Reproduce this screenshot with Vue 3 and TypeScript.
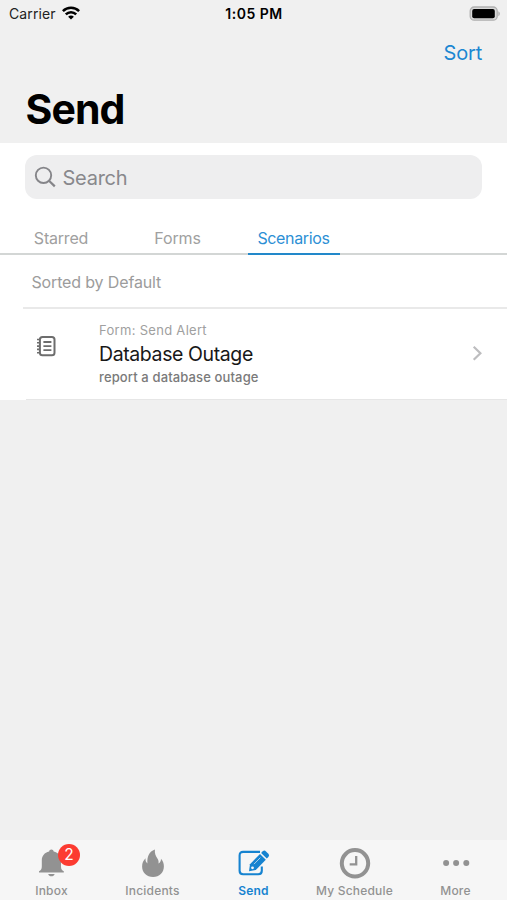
<script setup lang="ts">
import { ref } from 'vue'

interface NavItem {
  id: string
  label: string
  badge?: number
}

const tabs: string[] = ['Starred', 'Forms', 'Scenarios']
const activeTab = ref('Scenarios')

const navItems: NavItem[] = [
  { id: 'inbox', label: 'Inbox', badge: 2 },
  { id: 'incidents', label: 'Incidents' },
  { id: 'send', label: 'Send' },
  { id: 'schedule', label: 'My Schedule' },
  { id: 'more', label: 'More' },
]
const activeNav = ref('send')
</script>

<template>
  <div class="screen">
    <div class="status">
      <div class="carrier">
        <span class="carrier-name">Carrier</span>
        <svg class="wifi" width="18" height="14" viewBox="0 0 18 14">
          <g fill="none" stroke="#000" stroke-width="2.5">
            <path d="M0.9 5.1C5.4 0.6 12.6 0.6 17.1 5.1" />
            <path d="M3.8 8.4C6.7 5.5 11.3 5.5 14.2 8.4" />
          </g>
          <path d="M9 13.6L6.1 10.7C7.7 9.1 10.3 9.1 11.9 10.7Z" />
        </svg>
      </div>
      <span class="time">1:05 PM</span>
      <svg class="battery" width="32" height="16" viewBox="0 0 32 16">
        <rect x="1.2" y="1" width="27" height="13.2" rx="4" fill="#d8d8d8" stroke="#b0b0b0" stroke-width="1.3" />
        <rect x="3.2" y="2.9" width="22.6" height="9.4" rx="2" />
        <path d="M29.4 5.3C31.3 6.2 31.3 9.3 29.4 10.2Z" fill="#aaa" />
      </svg>
    </div>

    <header class="header">
      <a class="sort">Sort</a>
      <h1 class="title">Send</h1>
    </header>

    <main class="panel">
      <div class="search">
        <svg width="22" height="22" viewBox="0 0 22 22" fill="none" stroke="#858589" stroke-width="1.9">
          <circle cx="9.5" cy="9.3" r="7.7" />
          <path d="M15 14.8L20.8 20.4" stroke-width="2.2" />
        </svg>
        <span class="placeholder">Search</span>
      </div>

      <nav class="tabs">
        <button
          v-for="tab in tabs"
          :key="tab"
          class="tab"
          :class="[tab.toLowerCase(), { active: tab === activeTab }]"
          @click="activeTab = tab"
        >{{ tab }}</button>
      </nav>

      <div class="sorted">Sorted by Default</div>

      <article class="row">
        <svg class="notebook" width="20" height="22" viewBox="0 0 20 22" fill="none" stroke="#6d6d6d">
          <rect x="3.9" y="1.9" width="14.6" height="18.4" rx="2.6" stroke-width="2" />
          <path d="M1 4.5H4M1 7.8H4M1 11.1H4M1 14.4H4M1 17.7H4" stroke-width="1.6" />
          <path d="M7.4 7H15.4M7.4 11.1H15.4M7.4 15.2H15.4" stroke-width="1.8" />
        </svg>
        <div class="copy">
          <span class="form">Form: Send Alert</span>
          <span class="name">Database Outage</span>
          <span class="desc">report a database outage</span>
        </div>
        <svg class="chevron" width="11" height="16" viewBox="0 0 11 16" fill="none" stroke="#bdbdbf" stroke-width="2.2">
          <path d="M1.7 1.8L8.4 8.3L1.7 14.8" />
        </svg>
      </article>
    </main>

    <footer class="tabbar">
      <button
        v-for="item in navItems"
        :key="item.id"
        class="nav"
        :class="{ on: item.id === activeNav }"
        @click="activeNav = item.id"
      >
        <span class="icon">
          <svg v-if="item.id === 'inbox'" width="32" height="32" viewBox="0.6 0 32 32" fill="currentColor">
            <path d="M16 2.5C17.2 2.5 18.1 3.3 18.3 4.5C22.9 5.5 25.6 9 25.6 13.5V19.5C25.6 22.3 26.5 23 28.4 24.3V25.4H3.6V24.3C5.5 23 6.4 22.3 6.4 19.5V13.5C6.4 9 9.1 5.5 13.7 4.5C13.9 3.3 14.8 2.5 16 2.5Z" />
            <path d="M12.8 26.9H19.2C18.6 30.1 13.4 30.1 12.8 26.9Z" />
          </svg>
          <svg v-else-if="item.id === 'incidents'" width="32" height="32" viewBox="0 0 32 32" fill="currentColor">
            <path d="M17.9 2.6C17.5 6.6 18.7 9 20.4 11.4C21.6 13.2 21.9 14.8 21.4 16.6C23.3 15.6 24.1 14 24 11.8C26 14 26.9 16.6 26.9 19.2C26.9 25.8 22.4 30 16.1 30C9.7 30 5.1 25.8 5.1 19.5C5.1 16.1 6.4 13.4 8.6 11.3C8.3 13.4 8.8 15.2 10.4 16.4C10 9.6 12 4.7 17.9 2.6Z" />
          </svg>
          <svg v-else-if="item.id === 'send'" width="32" height="32" viewBox="0 0 32 32" fill="none" stroke="currentColor">
            <path d="M22 4.9H5.1Q1.6 4.9 1.6 8.4V23.8Q1.6 27.3 5.1 27.3H20.3Q23.8 27.3 23.8 23.8V19.5" stroke-width="2.1" />
            <path d="M11 24.2L12 17.2L22 7L27.8 12.8L17.8 23Z" fill="currentColor" stroke="none" />
            <path d="M23.1 5.9L24.8 4.3Q26.4 2.9 28 4.4L30.4 6.8Q31.9 8.4 30.4 10L28.8 11.6Z" fill="currentColor" stroke="none" />
            <path d="M16 17.1L22.4 10.6" stroke="#f6f6f6" stroke-opacity="0.75" stroke-width="0.9" />
            <circle cx="14.5" cy="20.8" r="1.4" fill="#f6f6f6" stroke="none" />
          </svg>
          <svg v-else-if="item.id === 'schedule'" width="32" height="32" viewBox="0 0 32 32" fill="none" stroke="currentColor">
            <circle cx="16" cy="16.3" r="13.2" stroke-width="4" />
            <path d="M17.2 9V17.3H10.7" stroke-width="2.3" />
          </svg>
          <svg v-else width="32" height="32" viewBox="0 0 32 32" fill="currentColor">
            <circle cx="6.1" cy="16" r="3" />
            <circle cx="16.1" cy="16" r="3" />
            <circle cx="26.3" cy="16" r="3" />
          </svg>
          <span v-if="item.badge" class="badge">{{ item.badge }}</span>
        </span>
        <span class="label">{{ item.label }}</span>
      </button>
    </footer>
  </div>
</template>

<style>
body {
  background: #f0f0f0;
}
</style>

<style scoped>
.screen {
  display: flex;
  flex-direction: column;
  height: 900px;
  overflow: hidden;
  background: #f0f0f0;
  color: #000;
  font-family: Inter, "Liberation Sans", sans-serif;
}
button {
  padding: 0;
  border: 0;
  background: none;
  color: inherit;
  font: inherit;
  letter-spacing: inherit;
}
svg {
  display: block;
  flex: none;
}
.status {
  display: grid;
  grid-template-columns: 1fr auto 1fr;
  align-items: center;
  height: 28px;
  padding: 0 6px 0 9px;
  font-size: 14px;
  line-height: 28px;
}
.carrier {
  display: flex;
  gap: 6px;
}
.carrier-name {
  color: #222;
  letter-spacing: 0.1px;
}
.wifi {
  margin-top: 6px;
}
.time {
  margin-right: 2px;
  font-weight: 600;
  letter-spacing: 0.5px;
}
.battery {
  justify-self: end;
}
.header {
  display: flex;
  flex-direction: column;
  height: 115px;
}
.sort {
  align-self: flex-end;
  margin-right: 25px;
  padding-top: 11px;
  color: #1c87d2;
  font-size: 20px;
  letter-spacing: -0.2px;
  line-height: 28px;
}
.title {
  margin: 17px 0 0 25.5px;
  font-size: 41px;
  font-weight: 700;
  letter-spacing: -0.9px;
  line-height: 50px;
}
.panel {
  box-sizing: border-box;
  height: 257px;
  padding-top: 12px;
  background: #fff;
}
.search {
  display: flex;
  align-items: center;
  gap: 6.5px;
  height: 44px;
  margin: 0 25px;
  padding-left: 9px;
  border-radius: 12px;
  background: #eeeeef;
}
.placeholder {
  padding-top: 1px;
  color: #88888c;
  font-size: 20px;
  letter-spacing: -0.25px;
}
.tabs {
  display: flex;
  box-sizing: border-box;
  height: 56px;
  padding: 24px 0 0 23px;
  border-bottom: 2px solid #d3d6d5;
  color: #a0a0a0;
  font-size: 16px;
  letter-spacing: -0.2px;
}
.tab {
  box-sizing: border-box;
  height: 32px;
  border-bottom: 2px solid transparent;
  line-height: 30px;
}
.starred {
  width: 76px;
}
.forms {
  width: 66px;
  margin-left: 45.5px;
  letter-spacing: -0.1px;
}
.scenarios {
  width: 92px;
  margin-left: 37px;
  letter-spacing: -0.35px;
}
.tab.active {
  border-color: #2288ca;
  color: #2c8fd5;
}
.sorted {
  box-sizing: border-box;
  height: 54px;
  margin-left: 23px;
  padding-left: 8.5px;
  border-bottom: 2px solid #e9e9e9;
  color: #9c9c9c;
  font-size: 16px;
  letter-spacing: -0.15px;
  line-height: 54px;
}
.row {
  display: flex;
  box-sizing: border-box;
  height: 91px;
  margin-left: 26px;
  padding: 0 24px 0 10px;
  border-bottom: 1px solid #e6e6e6;
}
.notebook {
  margin-top: 26px;
}
.copy {
  display: flex;
  flex: 1;
  flex-direction: column;
  align-items: flex-start;
  padding: 11px 0 0 43px;
  white-space: nowrap;
}
.form {
  color: #a0a0a0;
  font-size: 13px;
  letter-spacing: 0.3px;
  line-height: 20px;
}
.name {
  color: #181818;
  font-size: 19.5px;
  letter-spacing: -0.4px;
  line-height: 28px;
}
.desc {
  color: #7a7a7a;
  font-size: 13px;
  font-weight: 500;
  letter-spacing: 0.13px;
  line-height: 18px;
}
.chevron {
  margin-top: 36px;
}
.tabbar {
  display: grid;
  grid-template-columns: repeat(5, 101px);
  justify-content: start;
  box-sizing: border-box;
  height: 60px;
  margin-top: auto;
  padding-left: 1px;
  background: #f6f6f6;
  color: #929292;
}
.nav {
  display: flex;
  flex-direction: column;
  align-items: center;
  padding-top: 7px;
}
.nav.on {
  color: #1683d0;
}
.icon {
  position: relative;
}
.label {
  margin-top: 4px;
  font-size: 12px;
  font-weight: 500;
  letter-spacing: 0.2px;
  line-height: 16px;
}
.nav.on .label {
  font-weight: 600;
}
.badge {
  position: absolute;
  top: -3px;
  left: 22.5px;
  width: 22px;
  height: 22px;
  border-radius: 50%;
  background: #fc3b31;
  color: #fff;
  font-size: 15.5px;
  letter-spacing: 0;
  line-height: 22px;
  text-align: center;
}
</style>
